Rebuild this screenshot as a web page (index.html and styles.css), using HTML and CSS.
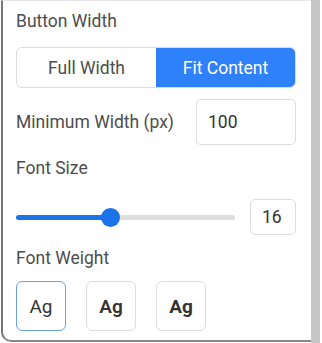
FILE: index.html
```html
<!DOCTYPE html>
<html lang="en">
<head>
	<meta charset="UTF-8">
	<title>Button settings</title>
	<link rel="stylesheet" href="styles.css">
</head>
<body>
	<div class="frame">
		<section class="panel">
			<div class="label first">Button Width</div>
			<div class="segment">
				<a href="javascript:;">Full Width</a>
				<a href="javascript:;" class="active">Fit Content</a>
			</div>

			<div class="row">
				<div class="label">Minimum Width (px)</div>
				<div class="field wide">100</div>
			</div>

			<div class="label gap">Font Size</div>
			<div class="row slider-row">
				<div class="slider">
					<div class="fill" style="width:94px"></div>
					<div class="thumb"></div>
					<div class="rest"></div>
				</div>
				<div class="field small">16</div>
			</div>

			<div class="label gap">Font Weight</div>
			<div class="weights">
				<a href="javascript:;" class="w400 active">Ag</a>
				<a href="javascript:;" class="w600">Ag</a>
				<a href="javascript:;" class="w700">Ag</a>
			</div>
		</section>
		<div class="scroll"></div>
	</div>
</body>
</html>
```

FILE: styles.css
```css
body{
	margin: 0;
	background: #fff;
	font-family: Roboto, "Liberation Sans", sans-serif;
	color: #444;
}
.frame{
	display: flex;
	height: 343px;
}
.panel{
	width: 295px;
	height: 329px;
	margin-left: 1px;
	padding: 10px 0 0 13px;
	border-left: 2px solid #777;
	border-top: 1px solid #e6e6e6;
	border-bottom: 2px solid #888;
	border-bottom-left-radius: 10px;
	background: #fff;
	display: flex;
	flex-direction: column;
}
.scroll{
	width: 9px;
	background: #c6c6c6;
}
.label{
	font-size: 17.5px;
	line-height: 21px;
	color: #4d4d4d;
}
.gap{
	margin-top: 13px;
}
.segment{
	margin-top: 15px;
	width: 278px;
	height: 39px;
	display: flex;
	border: 1px solid #dcdcdc;
	border-radius: 6px;
	overflow: hidden;
}
.segment a{
	flex: 1;
	display: flex;
	align-items: center;
	justify-content: center;
	font-size: 17.5px;
	color: #4d4d4d;
	text-decoration: none;
}
.segment a.active{
	background: #2f80fb;
	color: #fff;
}
.row{
	display: flex;
	align-items: center;
	width: 280px;
	margin-top: 11px;
}
.row .label{
	flex: 1;
}
.field{
	box-sizing: border-box;
	border: 1px solid #dcdcdc;
	border-radius: 5px;
	font-size: 17.5px;
	color: #333;
	display: flex;
	align-items: center;
	padding-left: 11px;
}
.field.wide{
	width: 100px;
	height: 46px;
}
.field.small{
	width: 46px;
	height: 36px;
	margin-left: 15px;
}
.slider-row{
	margin-top: 20px;
}
.slider{
	flex: 1;
	display: flex;
	align-items: center;
}
.fill{
	height: 5px;
	background: #1a73e8;
	border-radius: 3px 0 0 3px;
}
.thumb{
	width: 19px;
	height: 19px;
	border-radius: 50%;
	background: #1a73e8;
	margin: 0 -9px;
	position: relative;
	z-index: 1;
}
.rest{
	flex: 1;
	height: 5px;
	background: #dedede;
	border-radius: 0 3px 3px 0;
}
.weights{
	display: flex;
	gap: 20px;
	margin-top: 12px;
}
.weights a{
	box-sizing: border-box;
	width: 50px;
	height: 50px;
	border: 1px solid #dcdcdc;
	border-radius: 6px;
	display: flex;
	align-items: center;
	justify-content: center;
	font-size: 19px;
	color: #333;
	text-decoration: none;
}
.weights a.active{
	border-color: #6b9fe6;
}
.w400{ font-weight: 400; }
.w600{ font-weight: 600; }
.w700{ font-weight: 700; }
```
